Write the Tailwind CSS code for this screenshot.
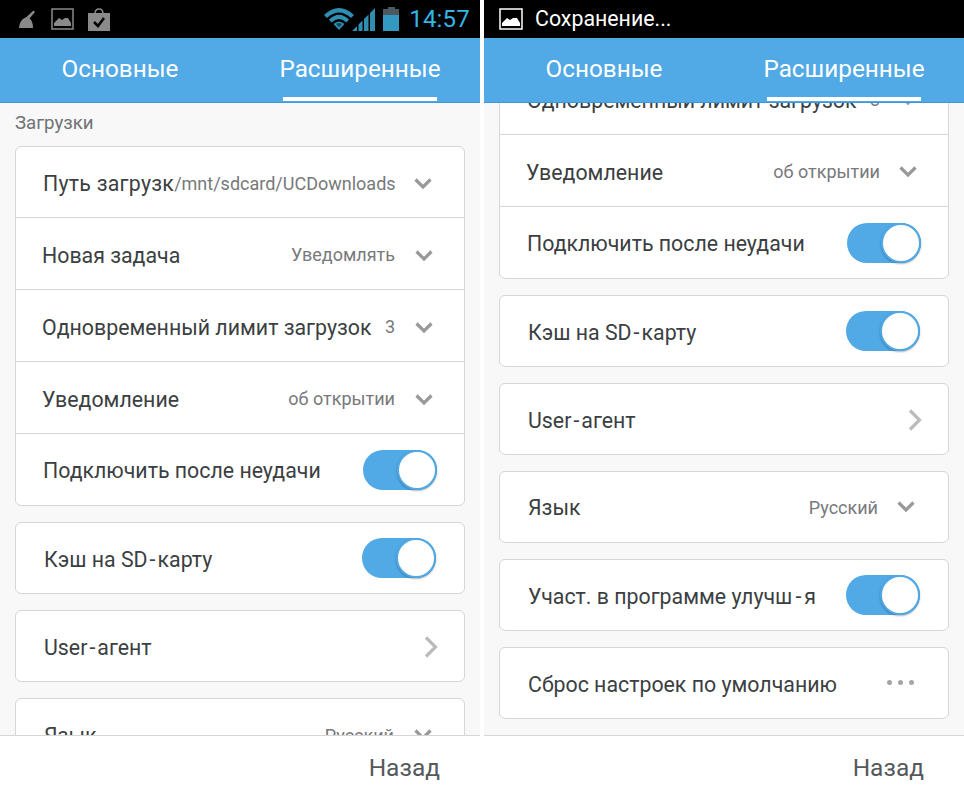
<!DOCTYPE html>
<html lang="ru">
<head>
<meta charset="UTF-8">
<title>Настройки</title>
<script src="https://cdn.jsdelivr.net/npm/@tailwindcss/browser@4"></script>
</head>
<body class="bg-white font-['Roboto',sans-serif] w-[964px] h-[800px] overflow-hidden">
<div class="flex gap-[4px] h-[800px]">

  <!-- left screen -->
  <div class="w-[480px] h-[800px] flex flex-col">
    <div class="h-[38px] bg-black flex items-center shrink-0">
      <svg class="ml-[19px]" width="18" height="18" viewBox="0 0 18 18"><path d="M7.500 7 L14.500 0.500 L16 2 L10.500 8.500 Q14 11 14 18 L0 18 Q0 10 7.500 7 Z" fill="#8a8a8a"/></svg>
      <svg class="ml-[14px]" width="23" height="22" viewBox="0 0 23 22"><rect x="1" y="1" width="21" height="20" fill="none" stroke="#8a8a8a" stroke-width="1.500"/><path d="M3 18 L3 15 L8 10 L11 12 L14 10 L17 10 L20 15 L20 18 Z" fill="#8a8a8a"/></svg>
      <svg class="ml-[14px]" width="22" height="23" viewBox="0 0 22 23"><path d="M7 6 Q7 1 11 1 Q15 1 15 6" fill="none" stroke="#8a8a8a" stroke-width="1.500"/><rect x="0" y="5" width="22" height="18" fill="#8a8a8a"/><path d="M6 14 L10 18 L16 10" fill="none" stroke="#000" stroke-width="2.500"/></svg>
      <svg class="ml-auto" width="30" height="22" viewBox="0 0 30 22"><path d="M0 7 Q15 -7 30 7 L27 10 Q15 -1 3 10 Z" fill="#2f8fb3"/><path d="M5 11.500 Q15 2 25 11.500 L22.500 14.500 Q15 7.500 7.500 14.500 Z" fill="#2f8fb3"/><path d="M9.500 16 Q15 11 20.500 16 L15 22 Z" fill="#2f8fb3"/><path d="M12 16 Q15 14 18 16 L15 19.500 Z" fill="#0e4a60"/></svg>
      <svg class="ml-[-2px]" width="23" height="23" viewBox="0 0 23 23"><path d="M0 23 L5 18 L5 23 Z M6.500 23 L6.500 16.500 L10.500 12.500 L10.500 23 Z M12 23 L12 11 L16.500 6.500 L16.500 23 Z M18 23 L18 5 L23 0 L23 23 Z" fill="#2f8fb3"/></svg>
      <svg class="ml-[8px]" width="16" height="24" viewBox="0 0 16 24"><rect x="5" y="0" width="7" height="3" fill="#4a5a60"/><rect x="0" y="2" width="16" height="22" fill="#4a5a60"/><rect x="0" y="8" width="16" height="16" fill="#3399c2"/></svg>
      <span class="ml-[10px] mr-[10px] text-[24px] leading-none tracking-[0.2px] text-[#33b5e5]">14:57</span>
    </div>
    <div class="h-[65px] bg-[#51a9e6] border-b border-[#3a98e0] flex shrink-0 relative z-10">
      <div class="w-1/2 flex justify-center pt-[16px] text-[24.3px] leading-[30px] text-white">Основные</div>
      <div class="w-1/2 flex justify-center pt-[16px] text-[24.3px] leading-[30px] text-white">Расширенные</div>
      <div class="absolute left-[283px] top-[59px] w-[154px] h-[4px] bg-white"></div>
    </div>
    <div class="flex-1 bg-[#f8f8f8] overflow-hidden px-[15px] text-[#3b3f42]">
      <div class="h-[43px] pt-[10px] text-[18.67px] leading-[20px] text-[#6f7376]">Загрузки</div>
      <div class="bg-white border border-[#d6d6d6] rounded-[6px] mb-[16px]">
        <div class="h-[71px] border-b border-[#d6d6d6] pl-[27px] pr-[32px] flex items-center">
          <span class="mt-[4px] text-[21.33px] tracking-[0.25px]">Путь загрузк</span><span class="mt-[2px] text-[18px] text-[#77797b]">/mnt/sdcard/UCDownloads</span>
          <svg class="ml-auto mt-[4px]" width="18" height="12" viewBox="0 0 18 12"><path d="M1.500 1.500 L9 9 L16.500 1.500" fill="none" stroke="#999" stroke-width="3.200"/></svg>
        </div>
        <div class="h-[72px] border-b border-[#d6d6d6] pl-[26px] pr-[31px] flex items-center">
          <span class="mt-[4px] text-[21.33px]">Новая задача</span><span class="ml-auto mr-[20px] mt-[2px] text-[18px] text-[#77797b]">Уведомлять</span>
          <svg class="mt-[4px]" width="18" height="12" viewBox="0 0 18 12"><path d="M1.500 1.500 L9 9 L16.500 1.500" fill="none" stroke="#999" stroke-width="3.200"/></svg>
        </div>
        <div class="h-[72px] border-b border-[#d6d6d6] pl-[26px] pr-[31px] flex items-center">
          <span class="mt-[4px] text-[21.33px]">Одновременный лимит загрузок</span><span class="ml-auto mr-[20px] mt-[2px] text-[18px] text-[#77797b]">3</span>
          <svg class="mt-[4px]" width="18" height="12" viewBox="0 0 18 12"><path d="M1.500 1.500 L9 9 L16.500 1.500" fill="none" stroke="#999" stroke-width="3.200"/></svg>
        </div>
        <div class="h-[72px] border-b border-[#d6d6d6] pl-[26px] pr-[31px] flex items-center">
          <span class="mt-[4px] text-[21.33px]">Уведомление</span><span class="ml-auto mr-[20px] mt-[2px] text-[18px] text-[#77797b]">об открытии</span>
          <svg class="mt-[4px]" width="18" height="12" viewBox="0 0 18 12"><path d="M1.500 1.500 L9 9 L16.500 1.500" fill="none" stroke="#999" stroke-width="3.200"/></svg>
        </div>
        <div class="h-[71px] pl-[27px] pr-[27px] flex items-center justify-between">
          <span class="mt-[3px] text-[21.33px]">Подключить после неудачи</span>
          <div class="w-[74px] h-[40px] rounded-full bg-[#51a9e6] relative"><div class="absolute right-0 top-0 w-[40px] h-[40px] rounded-full bg-white border-2 border-[#51a9e6] shadow-[0_1px_2px_rgba(0,0,0,0.3)]"></div></div>
        </div>
      </div>
      <div class="h-[72px] bg-white border border-[#d6d6d6] rounded-[6px] mb-[16px] pl-[28px] pr-[28px] flex items-center justify-between">
        <span class="mt-[4px] text-[21.33px]">Кэш на SD<span class="px-[2px]">-</span>карту</span>
        <div class="w-[74px] h-[40px] rounded-full bg-[#51a9e6] relative"><div class="absolute right-0 top-0 w-[40px] h-[40px] rounded-full bg-white border-2 border-[#51a9e6] shadow-[0_1px_2px_rgba(0,0,0,0.3)]"></div></div>
      </div>
      <div class="h-[72px] bg-white border border-[#d6d6d6] rounded-[6px] mb-[16px] pl-[28px] pr-[26px] flex items-center justify-between">
        <span class="mt-[4px] text-[21.33px]">User<span class="px-[2px]">-</span>агент</span>
        <svg class="mt-[2px]" width="14" height="22" viewBox="0 0 14 22"><path d="M2 1.500 L11.500 11 L2 20.500" fill="none" stroke="#bbb" stroke-width="3.200"/></svg>
      </div>
      <div class="h-[72px] bg-white border border-[#d6d6d6] rounded-[6px] pl-[28px] pr-[32px] flex items-center">
        <span class="mt-[4px] text-[21.33px]">Язык</span><span class="ml-auto mr-[20px] mt-[2px] text-[18px] text-[#77797b]">Русский</span>
        <svg class="mt-[2px]" width="18" height="12" viewBox="0 0 18 12"><path d="M1.500 1.500 L9 9 L16.500 1.500" fill="none" stroke="#999" stroke-width="3.200"/></svg>
      </div>
    </div>
    <div class="h-[65px] bg-white border-t border-[#d6d6d6] flex items-center justify-end pr-[40px] shrink-0">
      <span class="text-[24.5px] text-[#55595c]">Назад</span>
    </div>
  </div>

  <!-- right screen -->
  <div class="w-[480px] h-[800px] flex flex-col">
    <div class="h-[38px] bg-black flex items-center shrink-0">
      <svg class="ml-[15px]" width="24" height="22" viewBox="0 0 24 22"><rect x="1" y="1" width="22" height="20" fill="none" stroke="#fff" stroke-width="1.500"/><path d="M3 18 L3 15 L8 10 L11 12 L14 10 L18 10 L21 15 L21 18 Z" fill="#fff"/></svg>
      <span class="ml-[12px] text-[21.33px] text-white">Сохранение...</span>
    </div>
    <div class="h-[65px] bg-[#51a9e6] border-b border-[#3a98e0] flex shrink-0 relative z-10">
      <div class="w-1/2 flex justify-center pt-[16px] text-[24.3px] leading-[30px] text-white">Основные</div>
      <div class="w-1/2 flex justify-center pt-[16px] text-[24.3px] leading-[30px] text-white">Расширенные</div>
      <div class="absolute left-[283px] top-[59px] w-[154px] h-[4px] bg-white"></div>
    </div>
    <div class="flex-1 bg-[#f8f8f8] overflow-hidden px-[15px] text-[#3b3f42]">
      <div class="-mt-[41px] bg-white border border-[#d6d6d6] rounded-[6px] mb-[16px]">
        <div class="h-[72px] border-b border-[#d6d6d6] pl-[27px] pr-[31px] flex items-center">
          <span class="mt-[4px] text-[21.33px]">Одновременный лимит загрузок</span><span class="ml-auto mr-[19px] mt-[2px] text-[18px] text-[#77797b]">3</span>
          <svg class="mt-[2px]" width="18" height="12" viewBox="0 0 18 12"><path d="M1.500 1.500 L9 9 L16.500 1.500" fill="none" stroke="#999" stroke-width="3.200"/></svg>
        </div>
        <div class="h-[72px] border-b border-[#d6d6d6] pl-[26px] pr-[31px] flex items-center">
          <span class="mt-[4px] text-[21.33px]">Уведомление</span><span class="ml-auto mr-[19px] mt-[2px] text-[18px] text-[#77797b]">об открытии</span>
          <svg class="mt-[2px]" width="18" height="12" viewBox="0 0 18 12"><path d="M1.500 1.500 L9 9 L16.500 1.500" fill="none" stroke="#999" stroke-width="3.200"/></svg>
        </div>
        <div class="h-[71px] pl-[27px] pr-[27px] flex items-center justify-between">
          <span class="mt-[3px] text-[21.33px]">Подключить после неудачи</span>
          <div class="w-[74px] h-[40px] rounded-full bg-[#51a9e6] relative"><div class="absolute right-0 top-0 w-[40px] h-[40px] rounded-full bg-white border-2 border-[#51a9e6] shadow-[0_1px_2px_rgba(0,0,0,0.3)]"></div></div>
        </div>
      </div>
      <div class="h-[72px] bg-white border border-[#d6d6d6] rounded-[6px] mb-[16px] pl-[28px] pr-[28px] flex items-center justify-between">
        <span class="mt-[4px] text-[21.33px]">Кэш на SD<span class="px-[2px]">-</span>карту</span>
        <div class="w-[74px] h-[40px] rounded-full bg-[#51a9e6] relative"><div class="absolute right-0 top-0 w-[40px] h-[40px] rounded-full bg-white border-2 border-[#51a9e6] shadow-[0_1px_2px_rgba(0,0,0,0.3)]"></div></div>
      </div>
      <div class="h-[72px] bg-white border border-[#d6d6d6] rounded-[6px] mb-[16px] pl-[28px] pr-[26px] flex items-center justify-between">
        <span class="mt-[4px] text-[21.33px]">User<span class="px-[2px]">-</span>агент</span>
        <svg class="mt-[2px]" width="14" height="22" viewBox="0 0 14 22"><path d="M2 1.500 L11.500 11 L2 20.500" fill="none" stroke="#bbb" stroke-width="3.200"/></svg>
      </div>
      <div class="h-[72px] bg-white border border-[#d6d6d6] rounded-[6px] mb-[16px] pl-[28px] pr-[33px] flex items-center">
        <span class="mt-[2px] text-[21.33px]">Язык</span><span class="ml-auto mr-[19px] text-[18px] text-[#77797b]">Русский</span>
        <svg width="18" height="12" viewBox="0 0 18 12"><path d="M1.500 1.500 L9 9 L16.500 1.500" fill="none" stroke="#999" stroke-width="3.200"/></svg>
      </div>
      <div class="h-[72px] bg-white border border-[#d6d6d6] rounded-[6px] mb-[16px] pl-[28px] pr-[28px] flex items-center justify-between">
        <span class="mt-[4px] text-[21.33px]">Участ. в программе улучш<span class="px-[3px]">-</span>я</span>
        <div class="w-[74px] h-[40px] rounded-full bg-[#51a9e6] relative"><div class="absolute right-0 top-0 w-[40px] h-[40px] rounded-full bg-white border-2 border-[#51a9e6] shadow-[0_1px_2px_rgba(0,0,0,0.3)]"></div></div>
      </div>
      <div class="h-[72px] bg-white border border-[#d6d6d6] rounded-[6px] pl-[28px] pr-[34px] flex items-center justify-between">
        <span class="mt-[4px] text-[21.33px]">Сброс настроек по умолчанию</span>
        <div class="flex gap-[6px] mb-[2px]"><span class="w-[5px] h-[5px] rounded-full bg-[#a5a5a5]"></span><span class="w-[5px] h-[5px] rounded-full bg-[#a5a5a5]"></span><span class="w-[5px] h-[5px] rounded-full bg-[#a5a5a5]"></span></div>
      </div>
    </div>
    <div class="h-[65px] bg-white border-t border-[#d6d6d6] flex items-center justify-end pr-[40px] shrink-0">
      <span class="text-[24.5px] text-[#55595c]">Назад</span>
    </div>
  </div>
</div>
</body>
</html>
